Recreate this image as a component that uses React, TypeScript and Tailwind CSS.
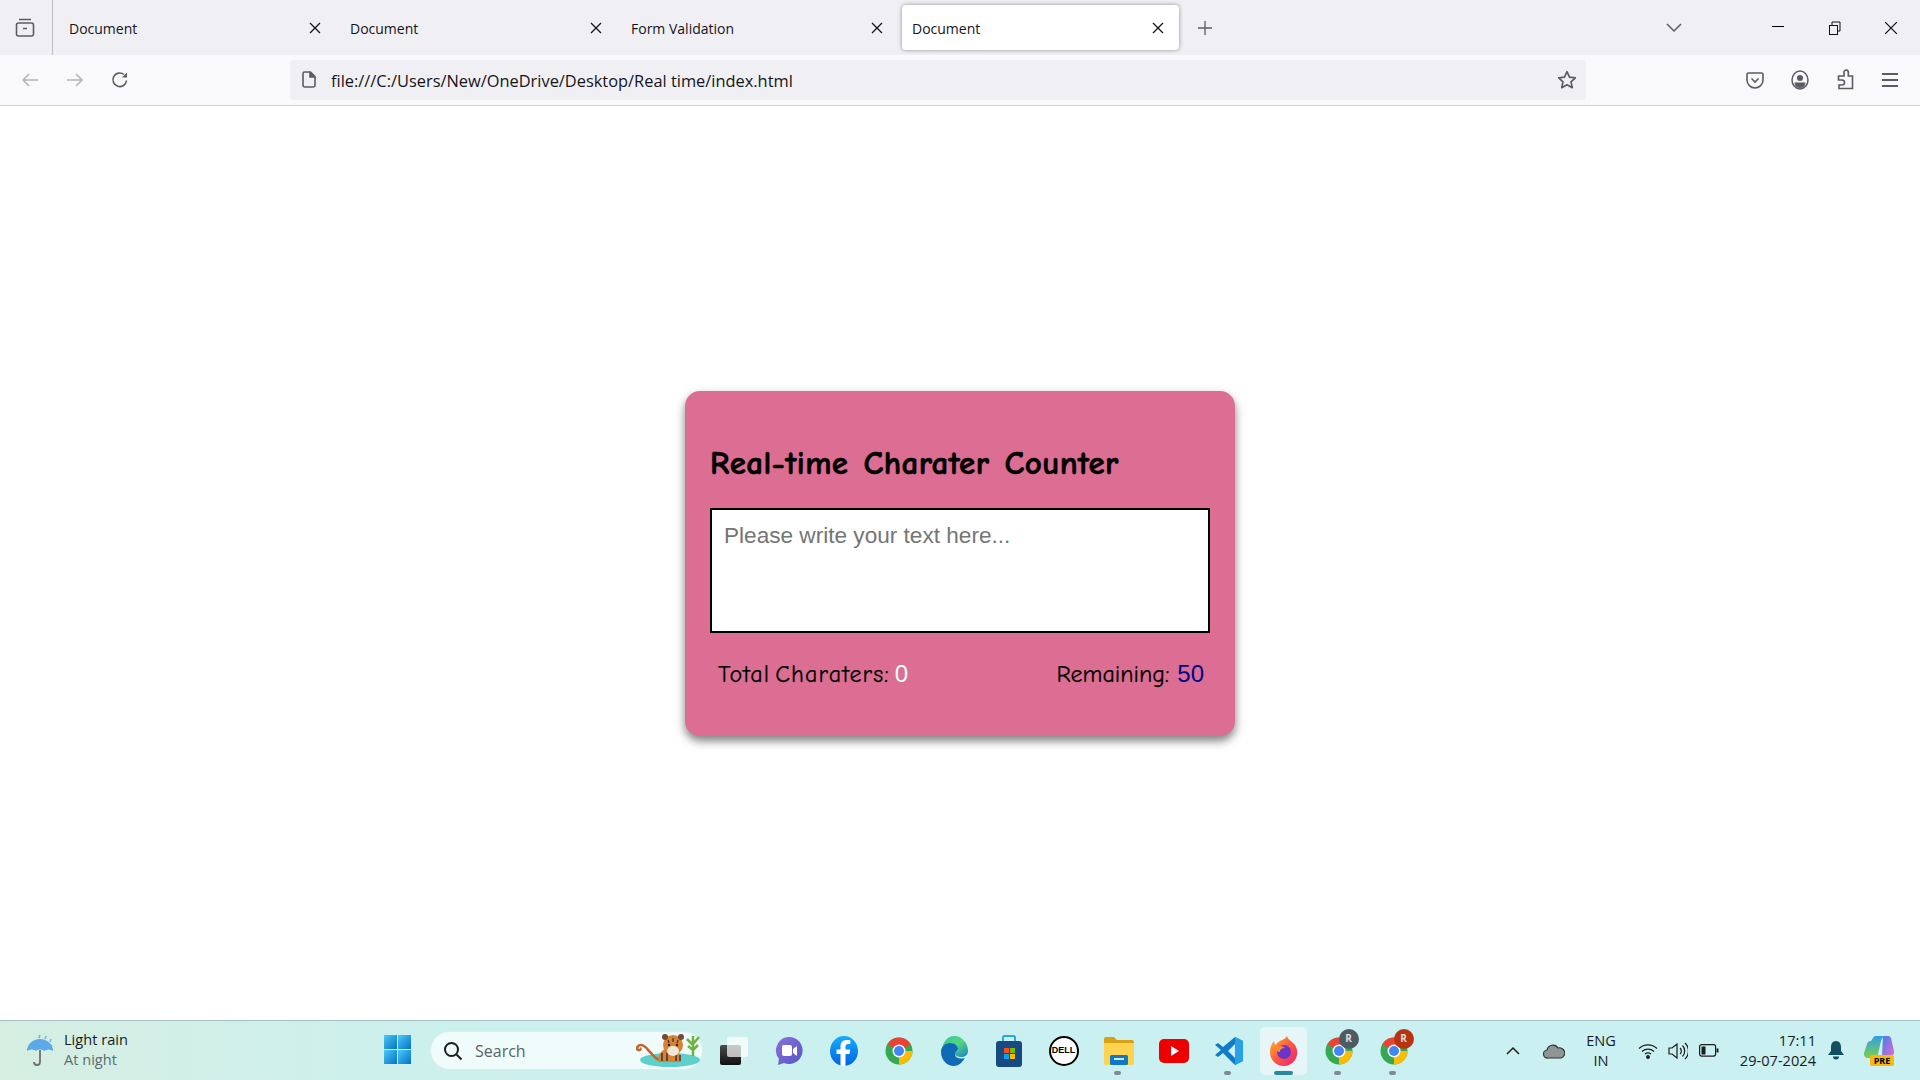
import React from "react";

const ui = { fontFamily: '"Open Sans", "Noto Sans", sans-serif' };

function X({ size = 12, color = "#15141a", sw = 1.3 }: { size?: number; color?: string; sw?: number }) {
  return (
    <svg width={size} height={size} viewBox="0 0 12 12" fill="none" stroke={color} strokeWidth={sw}>
      <path d="M1 1l10 10M11 1L1 11" />
    </svg>
  );
}

function Tab({ title, active }: { title: string; active?: boolean }) {
  return (
    <div className={active ? "w-[277px] h-[45px] rounded bg-white shadow-[0_0_4px_rgba(0,0,0,0.4)] flex items-center pl-[10px] pr-[15px] ml-[6px]" : "w-[281px] h-[45px] flex items-center pl-[16px] pr-[13px]"}>
      <span className="text-[14px] text-[#15141a] flex-1 leading-none pt-[2px]" style={ui}>{title}</span>
      <X />
    </div>
  );
}

function TopBar() {
  return (
    <div className="h-[55px] bg-[#f0f0f4] flex items-center shrink-0">
      <div className="w-[53px] h-[55px] flex items-center justify-center border-r border-[#bdbdc4] pr-[2px]">
        <svg width="20" height="20" viewBox="0 0 20 20" fill="none" stroke="#5b5b66" strokeWidth="1.6">
          <rect x="1.5" y="5" width="17" height="13" rx="2" />
          <path d="M4 1.5h12M8 10.5h4" />
        </svg>
      </div>
      <Tab title="Document" />
      <Tab title="Document" />
      <Tab title="Form Validation" />
      <Tab title="Document" active />
      <div className="w-[16px] ml-[18px] flex items-center">
        <svg width="16" height="16" viewBox="0 0 16 16" stroke="#5b5b66" strokeWidth="1.3"><path d="M8 1v14M1 8h14" /></svg>
      </div>
      <div className="ml-[453px] w-[16px]">
        <svg width="16" height="10" viewBox="0 0 16 10" fill="none" stroke="#5b5b66" strokeWidth="1.5"><path d="M1 1l7 7 7-7" /></svg>
      </div>
      <div className="ml-[90px] w-[14px]"><div className="h-px w-[12px] bg-black mb-[3px]" /></div>
      <div className="ml-[43px] w-[12px]">
        <svg width="12" height="14" viewBox="0 0 12 14" fill="none" stroke="#111" strokeWidth="1"><rect x="0.5" y="4.5" width="8" height="9" /><path d="M3 4V1h8v9H9" /></svg>
      </div>
      <div className="ml-[43px]"><X size={14} color="#111" sw={1.1} /></div>
    </div>
  );
}

function Toolbar() {
  return (
    <div className="h-[51px] bg-[#f9f9fb] border-b border-[#cfcfd8] flex items-center shrink-0 pb-[1px]">
      <div className="ml-[21px] w-[18px]">
        <svg width="18" height="16" viewBox="0 0 18 16" fill="none" stroke="#b4b4b9" strokeWidth="1.5"><path d="M17 8H2M8 2L2 8l6 6" /></svg>
      </div>
      <div className="ml-[27px] w-[18px]">
        <svg width="18" height="16" viewBox="0 0 18 16" fill="none" stroke="#b4b4b9" strokeWidth="1.5"><path d="M1 8h15M10 2l6 6-6 6" /></svg>
      </div>
      <div className="ml-[27px] w-[18px]">
        <svg width="18" height="18" viewBox="0 0 18 18" fill="none" stroke="#5b5b66" strokeWidth="1.6"><path d="M15.5 9.5A6.8 6.8 0 1 1 13 3.5" /><path d="M16 1.5v5h-5z" fill="#5b5b66" stroke="none" /></svg>
      </div>
      <div className="ml-[161px] w-[1296px] h-[40px] bg-[#f0f0f4] rounded-[4px] flex items-center">
        <div className="ml-[12px] w-[14px]">
          <svg width="14" height="17" viewBox="0 0 14 17" fill="none" stroke="#5b5b66" strokeWidth="1.6"><path d="M2.5 1h6l4.5 4.5V14a2 2 0 0 1-2 2H3a2 2 0 0 1-2-2V2.5A1.5 1.5 0 0 1 2.500 1z" /><path d="M8 1v5h5" fill="#5b5b66" /></svg>
        </div>
        <span className="ml-[15px] text-[16.4px] text-[#15141a] flex-1 leading-none pt-[4px]" style={ui}>file:///C:/Users/New/OneDrive/Desktop/Real time/index.html</span>
        <div className="mr-[9px]">
          <svg width="20" height="20" viewBox="0 0 24 24" fill="none" stroke="#5b5b66" strokeWidth="2" strokeLinejoin="round"><path d="M12 2l3 6.600 7 .8-5.200 4.800 1.500 7.100L12 17.700 5.700 21.300l1.500-7.100L2 9.400l7-.8z" /></svg>
        </div>
      </div>
      <div className="ml-[160px] w-[18px]">
        <svg width="18" height="18" viewBox="0 0 18 18" fill="none" stroke="#5b5b66" strokeWidth="1.6"><path d="M1 3.500A1.500 1.500 0 0 1 2.500 2h13A1.500 1.500 0 0 1 17 3.500V9a8 8 0 0 1-16 0z" /><path d="M5.500 7.500L9 11l3.500-3.500" /></svg>
      </div>
      <div className="ml-[27px] w-[18px]">
        <svg width="18" height="20" viewBox="0 0 18 20" fill="none" stroke="#5b5b66" strokeWidth="1.5"><ellipse cx="9" cy="10" rx="8" ry="9" /><circle cx="9" cy="8" r="3" fill="#5b5b66" stroke="none" /><path d="M3.500 12.500h11a5.500 5.500 0 0 1-11 0z" fill="#5b5b66" stroke="none" /></svg>
      </div>
      <div className="ml-[28px] w-[18px]">
        <svg width="17" height="21" viewBox="0 0 17 21" fill="none" stroke="#5b5b66" strokeWidth="1.6"><path d="M7 7V3.500a2.300 2.300 0 0 1 2.300-2.500 2.300 2.300 0 0 1 2 2.500V7h4.200v12.500H2V16h3a2.500 2.500 0 0 0 0-5H1.500V7z" /></svg>
      </div>
      <div className="ml-[27px] w-[16px] flex flex-col gap-[4px]">
        <div className="h-[2px] bg-[#5b5b66]" /><div className="h-[2px] bg-[#5b5b66]" /><div className="h-[2px] bg-[#5b5b66]" />
      </div>
    </div>
  );
}

const comic = { fontFamily: '"Comic Sans MS", "Comic Neue", "Lato", cursive' };
const arial = { fontFamily: '"Liberation Sans", Arial, sans-serif' };

function Card() {
  return (
    <main className="flex-1 bg-white flex items-center justify-center">
      <div className="w-[550px] h-[345px] bg-[#db6e92] rounded-[15px] shadow-[0_5px_10px_rgba(0,0,0,0.5)] px-[25px] pt-[50px]">
        <h1 className="text-[33px] font-bold leading-[44px] text-black tracking-[0.4px] [word-spacing:3px] [-webkit-text-stroke:0.6px_black]" style={comic}>Real-time Charater Counter</h1>
        <textarea
          readOnly
          placeholder="Please write your text here..."
          className="block mt-[23px] w-[500px] h-[125px] border-2 border-black bg-white px-[12px] py-[12px] text-[22.6px] leading-[27px] outline-none resize-none placeholder:text-[#757575]"
          style={arial}
        />
        <div className="flex justify-between mt-[25px] pl-[8px] pr-[6px] text-[24px] leading-[32px] text-black [-webkit-text-stroke:0.25px_black]" style={comic}>
          <p className="tracking-[1.1px] [word-spacing:-4px]">Total Charaters: <span className="text-white tracking-normal [-webkit-text-stroke:0px]" style={arial}>0</span></p>
          <p>Remaining: <span className="text-[#00008b] [-webkit-text-stroke:0px]" style={arial}>50</span></p>
        </div>
      </div>
    </main>
  );
}

function Chrome({ badge, badgeColor }: { badge?: string; badgeColor?: string }) {
  return (
    <div className="relative w-[28px] h-[28px]">
      <svg width="28" height="28" viewBox="0 0 28 28">
        <circle cx="14" cy="14" r="13.500" fill="#34a853" />
        <path d="M14 14L2.300 7.300A13.500 13.500 0 0 1 25.700 7.300z" fill="#ea4335" />
        <path d="M14 14h13.500A13.500 13.500 0 0 1 14 27.500z" fill="#fbbc04" />
        <circle cx="14" cy="14" r="6.500" fill="#fff" />
        <circle cx="14" cy="14" r="5" fill="#4285f4" />
      </svg>
      {badge && (
        <div className={"absolute -top-[8px] -right-[6px] w-[20px] h-[20px] rounded-full flex items-center justify-center text-[10px] font-bold text-[#ddd] " + badgeColor} style={ui}>{badge}</div>
      )}
    </div>
  );
}

function Slot({ children, dot, active }: { children: React.ReactNode; dot?: boolean; active?: boolean }) {
  return (
    <div className={active ? "relative w-[47px] h-[48px] mx-[4px] rounded-[5px] bg-[#e6f6f8] flex items-center justify-center" : "relative w-[47px] h-[48px] mx-[4px] flex items-center justify-center"}>
      {children}
      {dot && <div className="absolute bottom-0 left-[19px] w-[7px] h-[4px] rounded-full bg-[#7f8c8f]" />}
      {active && <div className="absolute bottom-0 left-[14px] w-[19px] h-[4px] rounded-full bg-[#2a8a9c]" />}
    </div>
  );
}

function Taskbar() {
  return (
    <footer className="h-[60px] shrink-0 border-t border-[#a8c4c6] bg-[linear-gradient(90deg,#d6eee2_0%,#cdf0ec_20%,#caf0f1_50%,#caf0f1_100%)] flex items-center">
      <div className="ml-[26px] w-[30px]">
        <svg width="30" height="34" viewBox="0 0 30 34">
          <path d="M14 16v12a3 3 0 0 1-6 0" fill="none" stroke="#6f6f6f" strokeWidth="1.800" />
          <path d="M1 17a13 12 0 0 1 26 0c-3-2-6-2-8.600 0-2.600-2-6-2-8.600 0-2.600-2-6-2-8.800 0z" fill="#5aa9e8" />
          <path d="M14 1l-1 3M20 2l-1 3M25 5l-1 3M26 11l-1 2" stroke="#6ab0e8" strokeWidth="1.500" fill="none" />
        </svg>
      </div>
      <div className="ml-[8px] w-[99px] text-[14.6px] leading-[20px] pb-[4px]" style={ui}>
        <div className="text-[#1c1c1c]">Light rain</div>
        <div className="text-[#5f6b6c]">At night</div>
      </div>
      <div className="ml-[221px] w-[27px] pb-[2px]">
        <svg width="27" height="29" viewBox="0 0 27 29">
          <defs><linearGradient id="w" x1="0" y1="0" x2="1" y2="1"><stop offset="0" stopColor="#4fc8f5" /><stop offset="1" stopColor="#0272c9" /></linearGradient></defs>
          <rect width="13" height="14" fill="url(#w)" />
          <rect x="14" width="13" height="14" fill="url(#w)" />
          <rect y="15" width="13" height="14" fill="url(#w)" />
          <rect x="14" y="15" width="13" height="14" fill="url(#w)" />
        </svg>
      </div>
      <div className="relative ml-[19px] w-[273px] h-[39px] rounded-full bg-[#f0fbfc] border border-[#d9eeee] flex items-center">
        <svg className="ml-[12px]" width="20" height="20" viewBox="0 0 20 20" fill="none" stroke="#1c1c1c" strokeWidth="2"><circle cx="8.500" cy="8.500" r="6.500" /><path d="M13.500 13.500L18.500 18.500" /></svg>
        <span className="ml-[12px] text-[16px] text-[#5b6364] leading-none" style={ui}>Search</span>
        <svg className="absolute right-[0px] top-[0px]" width="66" height="37" viewBox="0 0 66 37">
          <ellipse cx="34" cy="28" rx="30" ry="7" fill="#5fcfc9" />
          <path d="M26 28c-6 0-8-4-12-8-3-3-5-7-9-7-3 0-5 3-3 5 2 1 3-1 2-2" fill="none" stroke="#c0662e" strokeWidth="2.500" />
          <path d="M22 30c0-10 6-14 12-14s11 4 11 14z" fill="#d9822f" />
          <path d="M26 21v8M31 19v10M40 20v9M44 23v6" stroke="#3a3145" strokeWidth="1.500" />
          <circle cx="37" cy="13" r="10" fill="#d9822f" />
          <circle cx="29" cy="5" r="3" fill="#6f4a36" /><circle cx="45" cy="5" r="3" fill="#6f4a36" />
          <path d="M32 8l1 3M37 6v4M42 8l-1 3" stroke="#3a3145" strokeWidth="1.200" />
          <ellipse cx="37" cy="19" rx="6" ry="5" fill="#efe6d8" />
          <circle cx="33" cy="13" r="1.200" fill="#222" /><circle cx="41" cy="13" r="1.200" fill="#222" />
          <path d="M57 24V4M57 13l-6-6M57 12l6-7M57 18l-5-4M57 18l5-5" stroke="#6fb33a" strokeWidth="2.500" fill="none" />
        </svg>
      </div>
      <div className="flex items-center ml-[3px]">
        <Slot>
          <div className="relative w-[28px] h-[28px]">
            <div className="absolute left-0 bottom-0 w-[21px] h-[20px] rounded-[2px] bg-[linear-gradient(#4a4a4a,#111)]" />
            <div className="absolute right-0 top-0 w-[21px] h-[20px] rounded-[2px] bg-white/70" />
          </div>
        </Slot>
        <Slot>
          <svg width="28" height="30" viewBox="0 0 28 30">
            <defs><linearGradient id="m" x1="0" y1="0" x2="1" y2="1"><stop offset="0" stopColor="#8c6fd8" /><stop offset="1" stopColor="#5557c8" /></linearGradient></defs>
            <path d="M14 1a13.500 13.500 0 1 1-5 26l-6 2 1-6A13.500 13.500 0 0 1 14 1z" fill="url(#m)" />
            <rect x="7" y="9" width="10" height="11" rx="2" fill="#fff" />
            <path d="M18 13l4-3v10l-4-3z" fill="#fff" />
          </svg>
        </Slot>
        <Slot>
          <svg width="28" height="30" viewBox="0 0 28 30">
            <defs><linearGradient id="f" x1="0" y1="0" x2="0" y2="1"><stop offset="0" stopColor="#18acfe" /><stop offset="1" stopColor="#0163e0" /></linearGradient></defs>
            <ellipse cx="14" cy="15" rx="14" ry="15" fill="url(#f)" />
            <path d="M15.500 30V18h4l.7-4.500h-4.700v-3c0-1.300.6-2.500 2.600-2.500h2.200V4.200c-1.300-.2-2.600-.3-3.800-.3-3.800 0-6 2.300-6 6.300v3.300H6.500V18h4v12z" fill="#fff" />
          </svg>
        </Slot>
        <Slot><Chrome /></Slot>
        <Slot>
          <svg width="28" height="30" viewBox="0 0 28 30">
            <defs><linearGradient id="e" x1="0" y1="0" x2="1" y2="1"><stop offset="0" stopColor="#2fc4b0" /><stop offset="0.5" stopColor="#53d87b" /><stop offset="1" stopColor="#1b7fc9" /></linearGradient></defs>
            <path d="M14 0a14 15 0 0 1 14 15c0 4-3 6-7 6-3 0-6-1-6-3 0-2 3-2 3-5 0-3-3-5-6-5-6 0-10 5-11 9C2 7 7 0 14 0z" fill="url(#e)" />
            <path d="M1 16c0-5 4-9 9-9s8 3 8 6c0 2-3 3-3 5 0 5 7 5 10 4-3 5-7 8-11 8C7 30 1 24 1 16z" fill="#0f6ab5" />
          </svg>
        </Slot>
        <Slot>
          <svg width="26" height="32" viewBox="0 0 26 32">
            <path d="M7 7V2.500A1.500 1.500 0 0 1 8.500 1h9A1.500 1.500 0 0 1 19 2.500V7" fill="none" stroke="#27a7e0" strokeWidth="2" />
            <rect y="6" width="26" height="26" rx="3" fill="#174a80" />
            <rect x="8" y="13" width="5" height="5" fill="#f25022" /><rect x="14" y="13" width="5" height="5" fill="#7fba00" />
            <rect x="8" y="19" width="5" height="5" fill="#00a4ef" /><rect x="14" y="19" width="5" height="5" fill="#ffb900" />
          </svg>
        </Slot>
        <Slot>
          <div className="w-[30px] h-[30px] rounded-full border-2 border-black bg-white flex items-center justify-center text-[9px] font-bold text-black" style={arial}>DELL</div>
        </Slot>
        <Slot dot>
          <svg width="30" height="28" viewBox="0 0 30 28">
            <path d="M0 2a2 2 0 0 1 2-2h8l3 3h15a2 2 0 0 1 2 2v3H0z" fill="#d9a213" />
            <path d="M0 6h30v20a2 2 0 0 1-2 2H2a2 2 0 0 1-2-2z" fill="#fdd34f" />
            <rect x="6" y="18" width="18" height="10" rx="1.500" fill="#0f78c9" />
            <rect x="10" y="21" width="10" height="2" fill="#cdeafa" />
          </svg>
        </Slot>
        <Slot>
          <svg width="30" height="24" viewBox="0 0 30 24"><rect width="30" height="24" rx="5" fill="#ef0000" /><path d="M12 7l8 5-8 5z" fill="#fff" /></svg>
        </Slot>
        <Slot dot>
          <svg width="30" height="30" viewBox="0 0 30 30">
            <path d="M21 1l8 4v20l-8 4L9 17l-5 4-3-2 6-5-6-5 3-2 5 4z" fill="#0e7cc9" />
            <path d="M21 1l8 4v20l-8 4z" fill="#27a2e8" />
            <path d="M21 8v14l-7-7z" fill="#caf0f1" />
          </svg>
        </Slot>
        <Slot active>
          <svg width="28" height="30" viewBox="0 0 28 30">
            <defs><linearGradient id="ff" x1="0" y1="0" x2="1" y2="1"><stop offset="0" stopColor="#ffbd2e" /><stop offset="0.5" stopColor="#ff5a3c" /><stop offset="1" stopColor="#e81e7e" /></linearGradient></defs>
            <path d="M17 0c1 4 5 5 8 9 3 5 3 10 0 15-3 4-7 6-11 6C6 30 0 24 0 16 0 11 2 7 4 5c0 2 1 3 2 4 1-3 4-4 6-5 2-1 4-2 5-4z" fill="url(#ff)" />
            <circle cx="14" cy="16" r="7" fill="#6a35c9" />
            <path d="M5 12c3-3 8-2 10 0-3 0-5 1-5 4-3 0-4-2-5-4z" fill="#ff8a2e" />
          </svg>
        </Slot>
        <Slot dot><Chrome badge="R" badgeColor="bg-[#4f5b62]" /></Slot>
        <Slot dot><Chrome badge="R" badgeColor="bg-[#b8330f]" /></Slot>
      </div>
      <div className="ml-[85px] w-[14px]">
        <svg width="14" height="9" viewBox="0 0 14 9" fill="none" stroke="#1c1c1c" strokeWidth="1.500"><path d="M1 8l6-6 6 6" /></svg>
      </div>
      <div className="ml-[23px] w-[22px]">
        <svg width="22" height="16" viewBox="0 0 22 16"><path d="M5 15a4 4 0 0 1-1-8 6 6 0 0 1 11-2 5 5 0 0 1 3 10z" fill="#8f9596" stroke="#333" strokeWidth="1.200" /></svg>
      </div>
      <div className="ml-[19px] w-[34px] text-center text-[14.6px] leading-[20px] text-[#1c1c1c] pb-[2px]" style={ui}>ENG<br />IN</div>
      <div className="ml-[20px] w-[20px]">
        <svg width="20" height="16" viewBox="0 0 20 16" fill="none" stroke="#1c1c1c" strokeWidth="1.200"><path d="M1 5.500a13 13 0 0 1 18 0M4 8.500a9 9 0 0 1 12 0M7 11a5 5 0 0 1 6 0" /><circle cx="10" cy="14" r="1.300" fill="#1c1c1c" /></svg>
      </div>
      <div className="ml-[10px] w-[20px]">
        <svg width="20" height="18" viewBox="0 0 20 18" fill="none" stroke="#1c1c1c" strokeWidth="1.200"><path d="M1 6h3l5-4v14l-5-4H1z" /><path d="M12 6a4 4 0 0 1 0 6M14.500 3.500a8 8 0 0 1 0 11M17 1a11 11 0 0 1 0 16" /></svg>
      </div>
      <div className="ml-[11px] w-[20px]">
        <svg width="20" height="13" viewBox="0 0 20 13" fill="none" stroke="#1c1c1c" strokeWidth="1.200"><rect x="0.600" y="0.600" width="16" height="11.500" rx="2" /><rect x="2.500" y="2.500" width="4" height="8" fill="#1c1c1c" stroke="none" /><rect x="17.500" y="4.500" width="2" height="4" fill="#1c1c1c" stroke="none" /></svg>
      </div>
      <div className="ml-[19px] w-[78px] text-right text-[14.6px] leading-[20px] text-[#1c1c1c] whitespace-nowrap pb-[2px]" style={ui}>17:11<br />29-07-2024</div>
      <div className="ml-[12px] w-[16px]">
        <svg width="16" height="19" viewBox="0 0 16 19" fill="#12505f"><path d="M8 0c3.500 0 5 3 5 6v4l3 4H0l3-4V6c0-3 1.500-6 5-6z" /><path d="M5 15.500h6a3 3 0 0 1-6 0z" /></svg>
      </div>
      <div className="relative ml-[20px] w-[30px] h-[30px]">
        <svg width="30" height="24" viewBox="0 0 30 24">
          <defs>
            <linearGradient id="c1" x1="0" y1="0" x2="0" y2="1"><stop offset="0" stopColor="#2f9fe8" /><stop offset="1" stopColor="#7ed04a" /></linearGradient>
            <linearGradient id="c2" x1="0" y1="0" x2="1" y2="1"><stop offset="0" stopColor="#3f7fe8" /><stop offset="1" stopColor="#e46ad0" /></linearGradient>
          </defs>
          <path d="M19 0h5a3 3 0 0 1 3 2l3 13a4 4 0 0 1-4 5h-8z" fill="url(#c2)" />
          <path d="M9 2a3 3 0 0 1 3-2h10c-3 0-4 2-5 5l-3 13a4 4 0 0 1-4 4H4a4 4 0 0 1-4-5L3 8a4 4 0 0 1 4-3z" fill="url(#c1)" />
        </svg>
        <div className="absolute left-[6px] bottom-0 w-[24px] h-[11px] rounded-[2px] bg-[#f6b90c] text-[9px] leading-[11px] font-bold text-center text-black" style={ui}>PRE</div>
      </div>
    </footer>
  );
}

export default function App() {
  return (
    <div className="h-screen w-full flex flex-col overflow-hidden bg-white">
      <TopBar />
      <Toolbar />
      <Card />
      <Taskbar />
    </div>
  );
}
